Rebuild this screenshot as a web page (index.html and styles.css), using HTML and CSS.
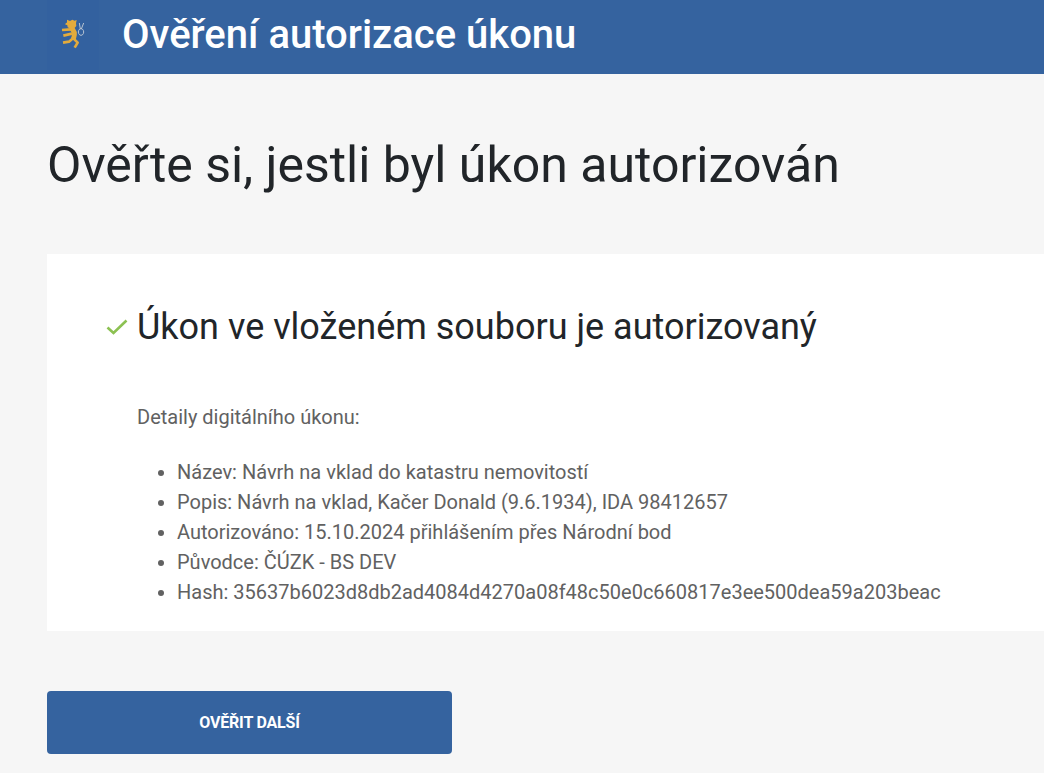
FILE: index.html
```html
<!DOCTYPE html>
<html lang="cs">
<head>
<meta charset="utf-8">
<title>Ověření autorizace úkonu</title>
<link rel="stylesheet" href="styles.css">
</head>
<body>
<header class="topbar">
  <div class="logo">
    <svg class="crest" viewBox="180 55 78 93" width="26" height="31">
      <path class="lion" d="M201 60l9 4 7-4 7 3 6-2-2 10 1 8-6 7-12 1-8-4-1-6-7-3 4-5 2 0z"/>
      <path class="limb body" d="M212 84q17 12 8 34"/>
      <path class="limb" d="M212 89l-26 2M216 102l-26 6M219 116l-12 10-18 3M220 116l13 13-9 15"/>
      <path class="ring" d="M238 70l3 18M251 70l-7 18M243 87a8 10 0 1 0 .1 0z"/>
    </svg>
  </div>
  <div class="apptitle">Ověření autorizace úkonu</div>
</header>
<main class="page">
  <h1 class="heading">Ověřte si, jestli byl úkon autorizován</h1>
  <section class="card">
    <h2 class="result">
      <svg class="check" viewBox="0 0 22 16" width="22" height="16"><path d="M1.500 8.500l6 5.500L20.500 1.500"/></svg>
      <span>Úkon ve vloženém souboru je autorizovaný</span>
    </h2>
    <div class="details">
      <p class="lead">Detaily digitálního úkonu:</p>
      <ul class="list">
        <li>Název: Návrh na vklad do katastru nemovitostí</li>
        <li>Popis: Návrh na vklad, Kačer Donald (9.6.1934), IDA 98412657</li>
        <li>Autorizováno: 15.10.2024 přihlášením přes Národní bod</li>
        <li>Původce: ČÚZK - BS DEV</li>
        <li>Hash: 35637b6023d8db2ad4084d4270a08f48c50e0c660817e3ee500dea59a203beac</li>
      </ul>
    </div>
  </section>
  <button class="btn" type="button">OVĚŘIT DALŠÍ</button>
</main>
</body>
</html>
```
FILE: styles.css
```css
* { box-sizing: border-box; }
html, body { margin: 0; height: 100%; overflow: hidden; }
body { background: #f6f6f6; font-family: Roboto, "Liberation Sans", sans-serif; color: #212529; }
.topbar { height: 74px; background: #35639f; display: flex; align-items: flex-start; padding-left: 47px; }
.logo { width: 52px; height: 70px; background: #33619f; padding: 18px 0 0 13px; }
.crest { display: block; }
.lion { fill: #e3ab3c; }
.limb { fill: none; stroke: #e3ab3c; stroke-width: 8; stroke-linejoin: round; }
.body { stroke-width: 15; }
.ring { fill: none; stroke: #b8c4d2; stroke-width: 3; }
.apptitle { margin-left: 23px; height: 70px; line-height: 70px; font-size: 40px; font-weight: 500; color: #fff; }
.page { padding: 0 0 0 47px; }
.heading { margin: 0; padding-top: 59px; font-size: 50px; line-height: 64px; font-weight: 400; height: 180px; }
.card { background: #fff; height: 377px; padding-top: 50px; }
.result { margin: 0; display: flex; align-items: center; font-size: 36px; font-weight: 400; line-height: 46px; padding-left: 59px; }
.check { fill: none; margin-right: 9px; margin-top: 0; }
.check path { stroke: #8cc152; stroke-width: 2.600; fill: none; }
.details { padding-left: 90px; color: #616161; font-size: 20px; line-height: 30px; }
.lead { margin: 0; padding-top: 52px; height: 107px; }
.list { margin: 0; padding: 0 0 0 40px; }
.btn { display: block; margin-top: 60px; width: 405px; height: 63px; background: #35639f; color: #fff; border: 0; border-radius: 4px; font-family: inherit; font-size: 16px; font-weight: 700; letter-spacing: -0.2px; }
```
